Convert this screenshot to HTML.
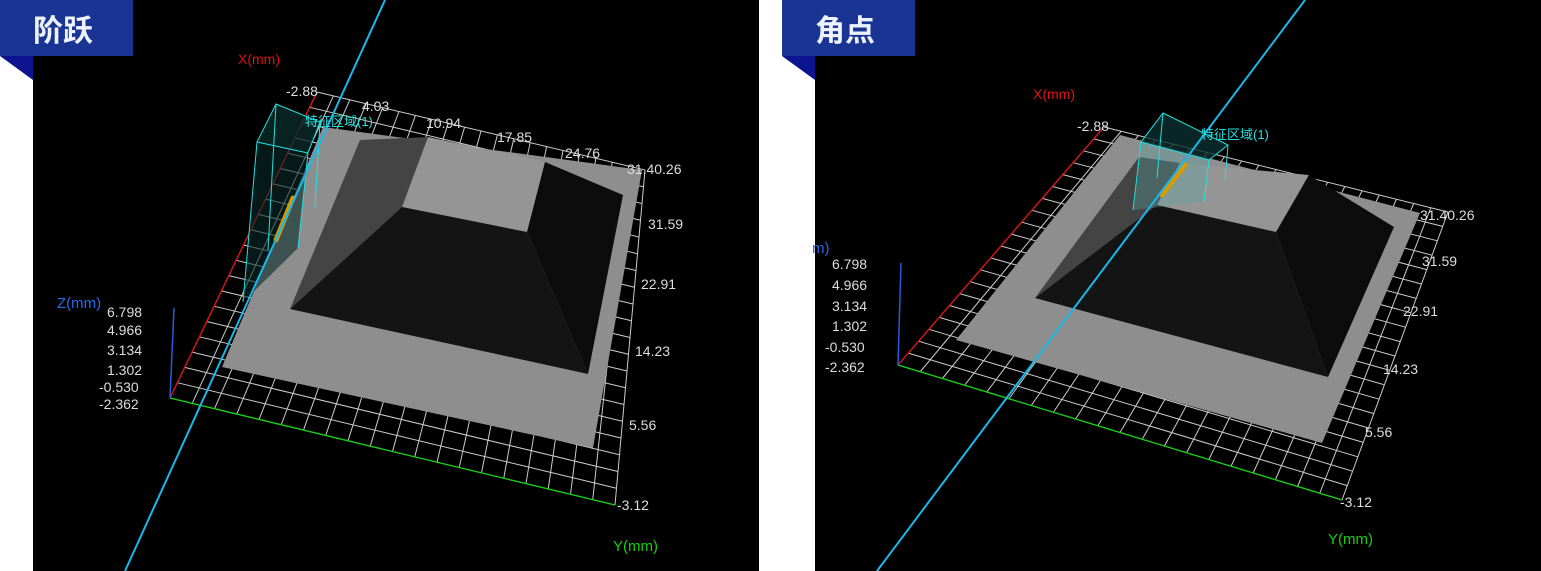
<!DOCTYPE html>
<html><head><meta charset="utf-8">
<style>
html,body{margin:0;padding:0;background:#fff;width:1541px;height:571px;overflow:hidden}
svg{position:absolute;left:0;top:0}
text{font-family:"Liberation Sans","Noto Sans CJK SC",sans-serif}
</style></head><body>
<svg id="s" width="1541" height="571" viewBox="0 0 1541 571">
<!-- panels -->
<rect x="33" y="0" width="726" height="571" fill="#000"/>
<rect x="815" y="0" width="726" height="571" fill="#000"/>
<g id="grids"></g>

<!-- LEFT scene -->
<polygon points="323,127 642,170 593,448 222,367" fill="#8e8e8e"/>
<polygon points="428,137 545,162 527,232 402,207" fill="#959595"/>
<polygon points="360,140 428,137 402,207 290,309" fill="#444"/>
<polygon points="545,162 623,195 588,374 527,232" fill="#0c0c0c"/>
<polygon points="402,207 527,232 588,374 290,309" fill="#141414"/>
<!-- feature box left -->
<polygon points="276,104 320,122 308,153 257,142" fill="#0a2a2a" fill-opacity="0.8"/>
<polygon points="257,142 308,153 298,248 243,302" fill="#0a2a2a" fill-opacity="0.6"/>
<g stroke="#22e0e0" stroke-width="1" fill="none">
<polygon points="276,104 320,122 308,153 257,142"/>
<line x1="276" y1="104" x2="268" y2="250"/>
<line x1="320" y1="122" x2="315" y2="208"/>
<line x1="308" y1="153" x2="298" y2="248"/>
<line x1="257" y1="142" x2="243" y2="302"/>
</g>
<line x1="293" y1="198" x2="276" y2="240" stroke="#d89a00" stroke-width="5" stroke-linecap="round"/>
<line x1="385" y1="0" x2="125" y2="571" stroke="#1ab8ea" stroke-width="2"/>
<line x1="174" y1="308" x2="170" y2="398" stroke="#2a5ad8" stroke-width="1.5"/>

<!-- RIGHT scene -->
<polygon points="1120,135 1420,213 1322,443 956,340" fill="#8e8e8e"/>
<polygon points="1180,163 1309,175 1276,232 1157,205" fill="#959595"/>
<polygon points="1139,157 1180,163 1157,205 1035,298" fill="#444"/>
<polygon points="1309,175 1394,227 1328,377 1276,232" fill="#0c0c0c"/>
<polygon points="1157,205 1276,232 1328,377 1035,298" fill="#141414"/>
<polygon points="1163,113 1228,145 1209,160 1141,142" fill="#0a3030" fill-opacity="0.8"/>
<polygon points="1141,142 1209,160 1202,202 1133,210" fill="#5aa0a0" fill-opacity="0.35"/>
<g stroke="#22e0e0" stroke-width="1" fill="none">
<polygon points="1163,113 1228,145 1209,160 1141,142"/>
<line x1="1163" y1="113" x2="1157" y2="178"/>
<line x1="1228" y1="145" x2="1225" y2="180"/>
<line x1="1209" y1="160" x2="1204" y2="202"/>
<line x1="1141" y1="142" x2="1133" y2="210"/>
</g>
<line x1="1185" y1="165" x2="1162" y2="195" stroke="#d89a00" stroke-width="5" stroke-linecap="round"/>
<line x1="1305" y1="0" x2="877" y2="571" stroke="#1ab8ea" stroke-width="2"/>
<line x1="901" y1="263" x2="898" y2="365" stroke="#2a5ad8" stroke-width="1.5"/>

<!-- LEFT text -->
<g font-size="14" fill="#ddd">
<text x="238" y="64" fill="#e01010">X(mm)</text>
<text x="286" y="96">-2.88</text>
<text x="362" y="111">4.03</text>
<text x="426" y="128">10.94</text>
<text x="497" y="142">17.85</text>
<text x="565" y="158">24.76</text>
<text x="627" y="174">31.40.26</text>
<text x="648" y="229">31.59</text>
<text x="641" y="289">22.91</text>
<text x="635" y="356">14.23</text>
<text x="629" y="430">5.56</text>
<text x="617" y="510">-3.12</text>
<text x="613" y="551" fill="#10d010" font-size="15">Y(mm)</text>
<text x="57" y="308" fill="#2a6ae8" font-size="15">Z(mm)</text>
<text x="107" y="317">6.798</text>
<text x="107" y="335">4.966</text>
<text x="107" y="355">3.134</text>
<text x="107" y="375">1.302</text>
<text x="99" y="392">-0.530</text>
<text x="99" y="409">-2.362</text>
<text x="305" y="126" fill="#22e0e0" font-size="13">特征区域(1)</text>
</g>
<!-- RIGHT text -->
<g font-size="14" fill="#ddd">
<text x="1033" y="99" fill="#e01010">X(mm)</text>
<text x="1077" y="131">-2.88</text>
<text x="1420" y="220">31.40.26</text>
<text x="1422" y="266">31.59</text>
<text x="1403" y="316">22.91</text>
<text x="1383" y="374">14.23</text>
<text x="1365" y="437">5.56</text>
<text x="1340" y="507">-3.12</text>
<text x="1328" y="544" fill="#10d010" font-size="15">Y(mm)</text>
<text x="812" y="253" fill="#2a6ae8" font-size="15">m)</text>
<text x="832" y="269">6.798</text>
<text x="832" y="290">4.966</text>
<text x="832" y="311">3.134</text>
<text x="832" y="331">1.302</text>
<text x="825" y="352">-0.530</text>
<text x="825" y="372">-2.362</text>
<text x="1201" y="139" fill="#22e0e0" font-size="13">特征区域(1)</text>
</g>

<!-- labels -->
<rect x="0" y="0" width="133" height="56" fill="#1a3494"/>
<polygon points="0,56 33,56 33,80" fill="#0c1490"/>
<text x="33" y="41" font-size="30" font-weight="bold" fill="#eef2ff">阶跃</text>
<rect x="782" y="0" width="133" height="56" fill="#1a3494"/>
<polygon points="782,56 815,56 815,80" fill="#0c1490"/>
<text x="815" y="41" font-size="30" font-weight="bold" fill="#eef2ff">角点</text>
</svg>
<script>
(function(){
var g=document.getElementById('grids'),ns='http://www.w3.org/2000/svg';
function L(a,b,c){var l=document.createElementNS(ns,'line');l.setAttribute('x1',a[0]);l.setAttribute('y1',a[1]);l.setAttribute('x2',b[0]);l.setAttribute('y2',b[1]);l.setAttribute('stroke',c);l.setAttribute('stroke-width',c=='#ccc'?1:1.3);g.appendChild(l);}
function lerp(p,q,t){return [p[0]+(q[0]-p[0])*t,p[1]+(q[1]-p[1])*t];}
function grid(A,B,C,D,n,m){
 for(var i=0;i<=n;i++){var t=i/n;L(lerp(A,D,t),lerp(B,C,t),'#ccc');}
 for(var j=0;j<=m;j++){var t=j/m;L(lerp(A,B,t),lerp(D,C,t),'#ccc');}
 L(A,B,'#e01010');L(A,D,'#10d010');
}
grid([170,398],[317,92],[645,170],[615,505],20,20);
grid([898,365],[1104,127],[1448,212],[1342,500],20,20);
})();
</script>
</body></html>
